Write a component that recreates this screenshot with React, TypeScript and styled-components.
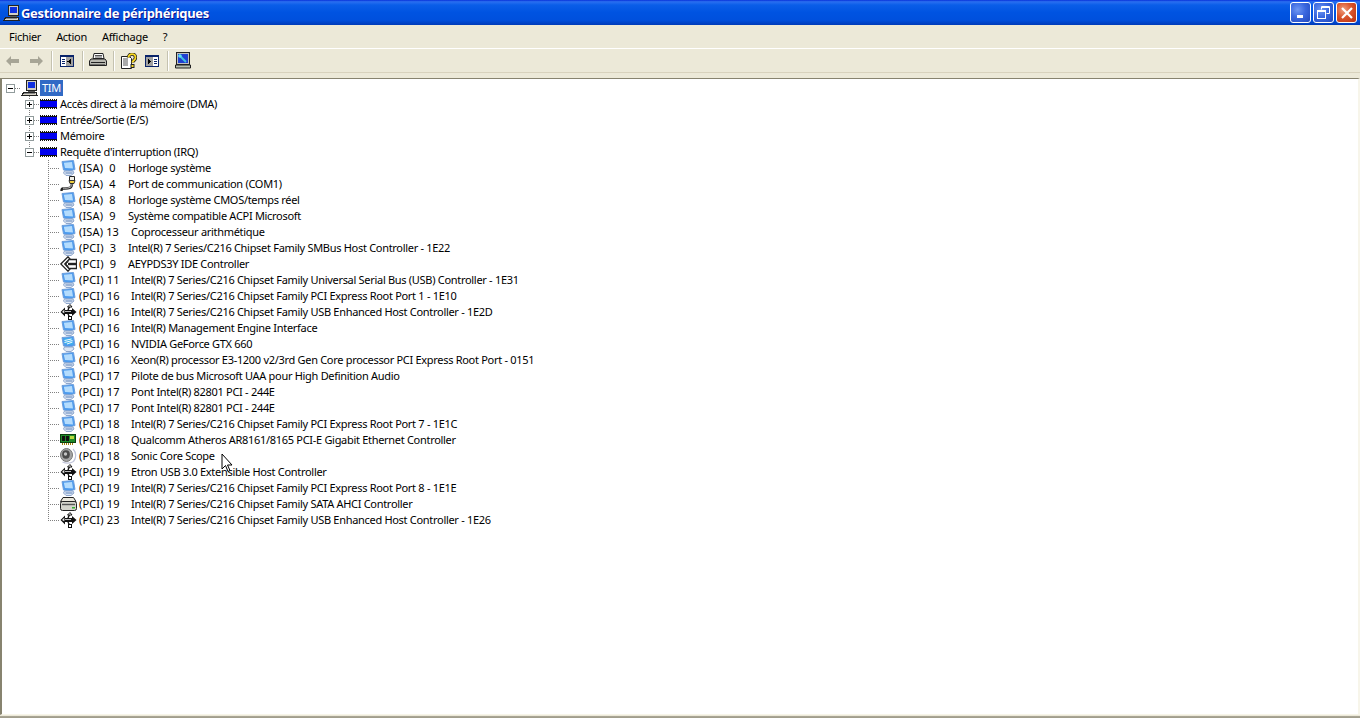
import React from "react";
import styled, { createGlobalStyle } from "styled-components";

const Global = createGlobalStyle`
  html, body { margin: 0; padding: 0; height: 100%; overflow: hidden; }
  body { font-family: "Noto Sans", "Open Sans", sans-serif; font-size: 11px; letter-spacing: -0.3px; color: #000; background: #ece9d8; }
`;

const Win = styled.div`
  width: 1360px; height: 718px; display: flex; flex-direction: column; overflow: hidden; background: #ece9d8; position: relative;
`;
const TitleBar = styled.div`
  height: 25px; flex: none; display: flex; align-items: center; padding: 0 3px 0 3px;
  background: linear-gradient(180deg, #0831d9 0%, #2a6ff0 7%, #0a5ee8 20%, #0053e1 50%, #0050dd 80%, #003bb8 100%);
`;
const TitleText = styled.div`
  flex: 1; margin-left: 1px; color: #fff; font: bold 13px "Noto Sans", sans-serif; letter-spacing: -0.3px; text-shadow: 1px 1px #0f1089; white-space: nowrap;
`;
const WinBtn = styled.div<{ $close?: boolean }>`
  width: 21px; height: 21px; box-sizing: border-box; border: 1px solid #fff; border-radius: 3px; margin-left: 2px;
  display: flex; align-items: center; justify-content: center;
  background: ${p => p.$close
    ? "radial-gradient(circle at 35% 35%, #f0a080 0%, #d9542c 45%, #b83010 100%)"
    : "radial-gradient(circle at 35% 35%, #6f97f3 0%, #3b68df 45%, #2148bd 100%)"};
`;
const MenuBar = styled.div`
  height: 23px; flex: none; display: flex; align-items: center; padding-left: 9px; gap: 15px; background: #ece9d8;
  border-bottom: 1px solid #fff;
`;
const MenuItem = styled.span``;
const ToolBar = styled.div`
  height: 23px; flex: none; display: flex; align-items: center; padding-left: 2px; background: #ece9d8;
  border-bottom: 1px solid #d8d2bd;
`;
const ToolBtn = styled.div<{ $w?: number }>`
  width: ${p => p.$w ?? 22}px; height: 22px; flex: none; display: flex; align-items: center; justify-content: center;
`;
const ToolSep = styled.div`
  width: 1px; height: 20px; background: #c5c2b0; margin: 0 4px; box-shadow: 1px 0 #fff;
`;
const Tree = styled.div`
  flex: 1; margin-top: 5px; padding-top: 1px; background: #fff;
  border-top: 1px solid #87836f; border-left: 2px solid #87836f; border-right: 2px solid #f7f5ea; border-bottom: 1px solid #f7f5ea;
  overflow: hidden; box-sizing: border-box;
`;
const BottomEdge = styled.div`
  height: 3px; flex: none; background: linear-gradient(180deg, #ece9d8 0, #ece9d8 1px, #aca899 1px, #9d9a88 100%);
`;
const Row = styled.div`
  height: 16px; display: flex; align-items: center; white-space: pre; flex: none;
`;
const Guide = styled.div<{ $x: number; $w: number; $last?: boolean; $tee?: boolean }>`
  width: ${p => p.$w}px; height: 16px; flex: none; margin-left: ${p => p.$x}px;
  ${p => p.$tee ? `background:
    repeating-linear-gradient(180deg,#808080 0 1px,transparent 1px 2px) 0 0/1px ${p.$last ? "8px" : "100%"} no-repeat,
    repeating-linear-gradient(90deg,#808080 0 1px,transparent 1px 2px) 0 8px/100% 1px no-repeat;` : ""}
`;
const ExpanderCell = styled.div<{ $last?: boolean }>`
  width: 9px; height: 16px; flex: none; display: flex; align-items: center;
  background: repeating-linear-gradient(180deg,#808080 0 1px,transparent 1px 2px) 4px 0/1px ${p => p.$last ? "8px" : "100%"} no-repeat;
`;
const Expander = styled.div`
  width: 9px; height: 9px; box-sizing: border-box; border: 1px solid #919b9c; background: #fff; flex: none; position: relative;
`;
const Sign = styled.i<{ $v?: boolean }>`
  position: absolute; background: #000;
  ${p => p.$v ? "left:3px;top:1px;width:1px;height:5px;" : "left:1px;top:3px;width:5px;height:1px;"}
`;
const Dash = styled.div<{ $w: number }>`
  width: ${p => p.$w}px; height: 1px; flex: none;
  background: repeating-linear-gradient(90deg,#808080 0 1px,transparent 1px 2px);
`;
const IconBox = styled.div<{ $w?: number }>`
  width: ${p => p.$w ?? 16}px; height: 16px; flex: none; display: flex; align-items: center; justify-content: center;
`;
const Label = styled.span<{ $sel?: boolean; $ml?: number }>`
  margin-left: ${p => p.$ml ?? 2}px; line-height: 16px; padding: 0 ${p => p.$sel ? 2 : 1}px;
  ${p => p.$sel ? "background:#316ac5;color:#fff;" : ""}
`;
const Res = styled.span<{ $w: number }>`
  display: inline-block; width: ${p => p.$w}px; flex: none; letter-spacing: 0.15px;
`;
const Name = styled.span``;

const Pc = () => (
  <svg width="17" height="16" viewBox="0 0 17 16" shapeRendering="crispEdges">
    <rect x="5.500" y="0.500" width="10" height="10" fill="#d4d0c4" stroke="#222" />
    <rect x="7" y="2" width="7" height="6" fill="#1030e0" />
    <rect x="7" y="11" width="7" height="1" fill="#555" />
    <path d="M3 12h12l1 3H1z" fill="#d8d4c8" stroke="#222" />
    <path d="M3 13h11" stroke="#888" />
  </svg>
);
const Chip = () => (
  <svg width="18" height="10" viewBox="0 0 18 10" shapeRendering="crispEdges">
    <rect x="1" y="0" width="17" height="10" fill="#111" />
    <path d="M2.500 0v1M4.500 0v1M6.500 0v1M8.500 0v1M10.500 0v1M12.500 0v1M14.500 0v1M16.500 0v1M2.500 9v1M4.500 9v1M6.500 9v1M8.500 9v1M10.500 9v1M12.500 9v1M14.500 9v1M16.500 9v1" stroke="#fff" />
    <rect x="1" y="2" width="17" height="6" fill="#0000f0" />
  </svg>
);
const Monitor = () => (
  <svg width="17" height="16" viewBox="0 0 17 16">
    <path d="M2 1.500 13.500 .5 15 9.500 9.500 11 3.500 10z" fill="#4d9bee" stroke="#6f9fdc" />
    <path d="M3.800 2.800 12 2 13 8.500 5 8z" fill="#b4dcfd" />
    <path d="M4.500 11h8.500l1 2-3 2.500H6L3.500 13z" fill="#dce6f4" stroke="#8ea6cc" />
    <path d="M5.500 13h7" stroke="#5f82b8" />
  </svg>
);
const Serial = () => (
  <svg width="17" height="16" viewBox="0 0 17 16">
    <path d="M9.500.5h5v4h-5z" fill="#f0efe6" stroke="#222" />
    <path d="M9 4.500h6l-1 3h-4z" fill="#f0d040" stroke="#333" />
    <path d="M12 7.500C12 13 8 12.500 3 12.500c-1 0-1.500 1-1.500 2.500" fill="none" stroke="#222" strokeWidth="2.400" />
    <path d="M12 8C12 12.500 7 12.200 3 12.200" fill="none" stroke="#eee" strokeWidth=".8" />
  </svg>
);
const Ide = () => (
  <svg width="17" height="16" viewBox="0 0 17 16">
    <path d="M.8 8 8 .8 10 3 5 8l5 5-2 2.200z" fill="#fff" stroke="#222" strokeWidth="1.300" />
    <path d="M5 8l4-4.500h7.500v9H9z" fill="#fff" stroke="#222" strokeWidth="1.300" />
    <path d="M8 8h8" stroke="#222" strokeWidth="2.400" />
    <path d="M8.500 5.500l-2.500 2.500 2.500 2.500" fill="none" stroke="#444" />
  </svg>
);
const Usb = () => (
  <svg width="17" height="16" viewBox="0 0 17 16">
    <path d="M.5 8 5 3.500V6h7V4l4.500 4-4.500 4v-2H5v2.500z" fill="#111" />
    <path d="M2 8l2.300-2.200v3.400z" fill="#e8e8e8" />
    <path d="M5 7.500h6" stroke="#bbb" />
    <path d="M8 6 9.500 2.500M8 10l1.500 3" stroke="#111" strokeWidth="1.400" />
    <path d="M7.500 3 10 .5 12 3z" fill="#fff" stroke="#111" />
    <rect x="8.500" y="12.500" width="3" height="3" fill="#fff" stroke="#111" />
  </svg>
);
const Nvidia = () => (
  <svg width="17" height="16" viewBox="0 0 17 16">
    <path d="M2 1.500 13.500 .5 15 9.500 9.500 11 3.500 10z" fill="#4d9bee" stroke="#6f9fdc" />
    <path d="M3.800 2.800 12 2 13 8.500 5 8z" fill="#3cb4ec" />
    <path d="M4.500 4.500 11.500 3M4.500 6.500l8-2M7 8l5.500-2" stroke="#f4f8ff" />
    <path d="M4.500 11h8.500l1 2-3 2.500H6L3.500 13z" fill="#dce6f4" stroke="#8ea6cc" />
  </svg>
);
const Net = () => (
  <svg width="17" height="12" viewBox="0 0 17 12" shapeRendering="crispEdges">
    <rect x="0.500" y="0.500" width="15" height="8" fill="#1f8a2a" stroke="#0a4010" />
    <rect x="2" y="2" width="3" height="5" fill="#111" />
    <rect x="6" y="2" width="3" height="5" fill="#111" />
    <rect x="10" y="2" width="4" height="3" fill="#b8d840" />
    <path d="M2 10h12" stroke="#a08010" strokeWidth="2" strokeDasharray="1 1" />
  </svg>
);
const Speaker = () => (
  <svg width="17" height="16" viewBox="0 0 17 16">
    <ellipse cx="6.500" cy="7" rx="6" ry="6.500" fill="#a4a4a4" stroke="#777" />
    <ellipse cx="6" cy="6.500" rx="3.800" ry="4.200" fill="#4a4a4a" />
    <circle cx="5.500" cy="6" r="1.700" fill="#c4c4c4" />
    <path d="M13 1c3.500 3.500 3.500 9 .5 12.500M2.500 14c3.500 1.500 8 1.300 11-.5" stroke="#bfc3d8" fill="none" strokeWidth="1.200" />
  </svg>
);
const Sata = () => (
  <svg width="17" height="16" viewBox="0 0 17 16">
    <path d="M3 1.500h10.500l2.500 4H.5z" fill="#ebe8dc" stroke="#222" />
    <rect x="0.500" y="5.500" width="16" height="9" rx="2" fill="#d4d4cc" stroke="#222" />
    <path d="M2 8.500h13" stroke="#555" strokeWidth="1.400" />
    <rect x="12" y="11" width="3" height="1.500" fill="#30b030" />
  </svg>
);

type Kind = "m" | "s" | "i" | "u" | "n" | "e" | "a" | "h";
const icons: Record<Kind, React.ReactElement> = { m: <Monitor />, s: <Serial />, i: <Ide />, u: <Usb />, n: <Nvidia />, e: <Net />, a: <Speaker />, h: <Sata /> };

const rows: [Kind, string, number, string][] = [
  ["m", "(ISA)  0", 49, "Horloge système"],
  ["s", "(ISA)  4", 49, "Port de communication (COM1)"],
  ["m", "(ISA)  8", 49, "Horloge système CMOS/temps réel"],
  ["m", "(ISA)  9", 49, "Système compatible ACPI Microsoft"],
  ["m", "(ISA) 13", 52, "Coprocesseur arithmétique"],
  ["m", "(PCI)  3", 49, "Intel(R) 7 Series/C216 Chipset Family SMBus Host Controller - 1E22"],
  ["i", "(PCI)  9", 49, "AEYPDS3Y IDE Controller"],
  ["m", "(PCI) 11", 52, "Intel(R) 7 Series/C216 Chipset Family Universal Serial Bus (USB) Controller - 1E31"],
  ["m", "(PCI) 16", 52, "Intel(R) 7 Series/C216 Chipset Family PCI Express Root Port 1 - 1E10"],
  ["u", "(PCI) 16", 52, "Intel(R) 7 Series/C216 Chipset Family USB Enhanced Host Controller - 1E2D"],
  ["m", "(PCI) 16", 52, "Intel(R) Management Engine Interface"],
  ["n", "(PCI) 16", 52, "NVIDIA GeForce GTX 660"],
  ["m", "(PCI) 16", 52, "Xeon(R) processor E3-1200 v2/3rd Gen Core processor PCI Express Root Port - 0151"],
  ["m", "(PCI) 17", 52, "Pilote de bus Microsoft UAA pour High Definition Audio"],
  ["m", "(PCI) 17", 52, "Pont Intel(R) 82801 PCI - 244E"],
  ["m", "(PCI) 17", 52, "Pont Intel(R) 82801 PCI - 244E"],
  ["m", "(PCI) 18", 52, "Intel(R) 7 Series/C216 Chipset Family PCI Express Root Port 7 - 1E1C"],
  ["e", "(PCI) 18", 52, "Qualcomm Atheros AR8161/8165 PCI-E Gigabit Ethernet Controller"],
  ["a", "(PCI) 18", 52, "Sonic Core Scope"],
  ["u", "(PCI) 19", 52, "Etron USB 3.0 Extensible Host Controller"],
  ["m", "(PCI) 19", 52, "Intel(R) 7 Series/C216 Chipset Family PCI Express Root Port 8 - 1E1E"],
  ["h", "(PCI) 19", 52, "Intel(R) 7 Series/C216 Chipset Family SATA AHCI Controller"],
  ["u", "(PCI) 23", 52, "Intel(R) 7 Series/C216 Chipset Family USB Enhanced Host Controller - 1E26"],
];

const groups: [string, boolean][] = [
  ["Accès direct à la mémoire (DMA)", false],
  ["Entrée/Sortie (E/S)", false],
  ["Mémoire", false],
  ["Requête d'interruption (IRQ)", true],
];

const Cursor = styled.svg`
  position: absolute; left: 221px; top: 453px;
`;

export default function App() {
  return (
    <Win>
      <Global />
      <TitleBar>
        <Pc />
        <TitleText>Gestionnaire de périphériques</TitleText>
        <WinBtn><svg width="11" height="11" viewBox="0 0 11 11"><rect x="2" y="8" width="6" height="3" fill="#fff" /></svg></WinBtn>
        <WinBtn><svg width="13" height="13" viewBox="0 0 13 13" fill="none" stroke="#fff"><path d="M4.500 3.500V.5h8v7h-3" /><rect x="0.500" y="4.500" width="8" height="8" /><path d="M1 5.500h7M5 1.500h7" /></svg></WinBtn>
        <WinBtn $close><svg width="12" height="12" viewBox="0 0 12 12"><path d="M1 1l10 10M11 1 1 11" stroke="#fff" strokeWidth="2.200" /></svg></WinBtn>
      </TitleBar>
      <MenuBar>
        <MenuItem>Fichier</MenuItem><MenuItem>Action</MenuItem><MenuItem>Affichage</MenuItem><MenuItem>?</MenuItem>
      </MenuBar>
      <ToolBar>
        <ToolBtn><svg width="14" height="10" viewBox="0 0 14 10"><path d="M0 5 5 0v3h8v4H5v3z" fill="#a7a596" /></svg></ToolBtn>
        <ToolBtn $w={23}><svg width="14" height="10" viewBox="0 0 14 10"><path d="M14 5 9 0v3H1v4h8v3z" fill="#a7a596" /></svg></ToolBtn>
        <ToolSep />
        <ToolBtn><svg width="14" height="12" viewBox="0 0 14 12" shapeRendering="crispEdges"><rect x="0.500" y="0.500" width="13" height="11" fill="#fff" stroke="#0a246a" /><rect x="0" y="0" width="14" height="2" fill="#0a246a" /><rect x="6" y="2" width="7" height="9" fill="#a0a0a0" /><path d="M2 4h3M2 6h3M2 8h3" stroke="#0a246a" /><path d="M11 3.500 7.500 6.500 11 9.500z" fill="#000" /></svg></ToolBtn>
        <ToolSep />
        <ToolBtn><svg width="18" height="15" viewBox="0 0 18 15"><path d="M5 .5h9l1 5H4z" fill="#fff" stroke="#222" /><path d="M2 6h14l1.500 2v4.500H.5V8z" fill="#b8b8b0" stroke="#222" /><path d="M2 9.500h14M1 12h15" stroke="#222" /><path d="M6 2.500h7M6 4h7" stroke="#555" /></svg></ToolBtn>
        <ToolSep />
        <ToolBtn><svg width="16" height="16" viewBox="0 0 16 16"><path d="M.5 3.500h8l2 2v10H.5z" fill="#fff" stroke="#222" /><path d="M2 6h5M2 8h5M2 10h5M2 12h5" stroke="#555" /><path d="M7.500 4.500c0-4.500 7-4.500 7 0 0 3-3 3-3 5" fill="none" stroke="#222" strokeWidth="3.400" /><path d="M7.500 4.500c0-4.500 7-4.500 7 0 0 3-3 3-3 5" fill="none" stroke="#f8d820" strokeWidth="1.800" /><rect x="10" y="11.500" width="3" height="3" fill="#f8d820" stroke="#222" /></svg></ToolBtn>
        <ToolBtn $w={23}><svg width="14" height="12" viewBox="0 0 14 12" shapeRendering="crispEdges"><rect x="0.500" y="0.500" width="13" height="11" fill="#fff" stroke="#0a246a" /><rect x="0" y="0" width="14" height="2" fill="#0a246a" /><rect x="1" y="2" width="7" height="9" fill="#a0a0a0" /><path d="M9 4h3M9 6h3M9 8h3" stroke="#0a246a" /><path d="M3 3.500 6.500 6.500 3 9.500z" fill="#000" /></svg></ToolBtn>
        <ToolSep />
        <ToolBtn><svg width="16" height="17" viewBox="0 0 16 17"><rect x="1.500" y="0.500" width="13" height="12" fill="#c0c0c0" stroke="#222" /><rect x="3" y="2" width="10" height="9" fill="#2040d0" /><path d="M4 3l7 7" stroke="#40c0e0" strokeWidth="2" /><circle cx="5" cy="4" r="1.800" fill="#60e0f0" /><path d="M.5 13h15v3H.5z" fill="#b8c0b0" stroke="#222" /></svg></ToolBtn>
      </ToolBar>
      <Tree>
        <Row>
          <Guide $x={4} $w={0} />
          <Expander><Sign /></Expander>
          <Dash $w={6} />
          <IconBox $w={17}><Pc /></IconBox>
          <Label $sel>TIM</Label>
        </Row>
        {groups.map(([g, open]) => (
          <Row key={g}>
            <Guide $x={23} $w={0} />
            <ExpanderCell $last={open}><Expander><Sign />{!open && <Sign $v />}</Expander></ExpanderCell>
            <Dash $w={5} />
            <IconBox $w={18}><Chip /></IconBox>
            <Label>{g}</Label>
          </Row>
        ))}
        {rows.map(([k, res, w, name], i) => (
          <Row key={i}>
            <Guide $x={46} $w={12} $tee $last={i === rows.length - 1} />
            <IconBox $w={17}>{icons[k]}</IconBox>
            <Label $ml={1}><Res $w={w}>{res}</Res><Name>{name}</Name></Label>
          </Row>
        ))}
      </Tree>
      <BottomEdge />
      <Cursor width="13" height="20" viewBox="0 0 13 20"><path d="M1 1v15l3.500-3.500 2.500 6 2-1-2.500-5.500H11z" fill="#fff" stroke="#000" /></Cursor>
    </Win>
  );
}
